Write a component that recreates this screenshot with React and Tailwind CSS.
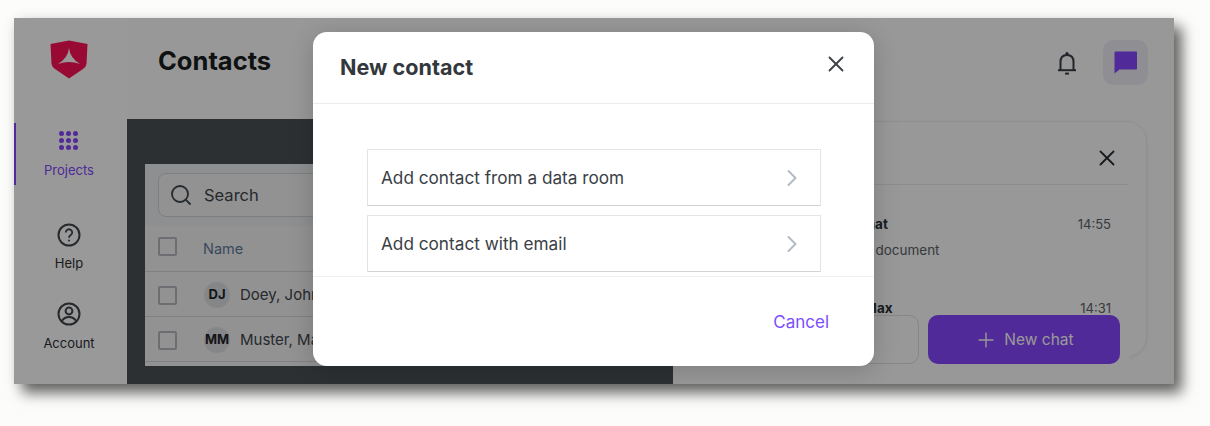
import React from 'react'
import { ChevronRight, Plus, Search, X } from 'lucide-react'

const font = 'font-["Inter","Liberation_Sans",sans-serif]'

function Logo() {
    return (
        <svg width="38" height="39" viewBox="0 0 38 39">
            <path d="M0.5 4 L19 0.500 L37.500 4 L36.500 24 Q36 27 33 29 L19 38.500 L5 29 Q2 27 1.500 24 Z" fill="#fe1255" />
            <path d="M19 8 Q20 18 30 24 Q19 20 8 24 Q18 18 19 8 Z" fill="#ffffff" />
        </svg>
    )
}

function Dots() {
    const dots = [0, 1, 2, 3, 4, 5, 6, 7, 8]
    return (
        <div className="grid grid-cols-3 gap-[2px] w-[19px]">
            {dots.map((d) => (
                <span key={d} className="w-[5px] h-[5px] rounded-full bg-[#8446fd]" />
            ))}
        </div>
    )
}

function HelpIcon() {
    return (
        <svg width="24" height="24" viewBox="0 0 24 24" fill="none" stroke="#40464c" strokeWidth="2">
            <circle cx="12" cy="12" r="10.5" />
            <path d="M8.8 9.5 a3.2 3.2 0 1 1 5 2.6 c-1.2 .8 -1.8 1.4 -1.8 2.6" strokeWidth="1.8" />
            <circle cx="12" cy="17.6" r="1" fill="#40464c" stroke="none" />
        </svg>
    )
}

function AccountIcon() {
    return (
        <svg width="24" height="24" viewBox="0 0 24 24" fill="none" stroke="#40464c" strokeWidth="2">
            <circle cx="12" cy="12" r="10.5" />
            <circle cx="12" cy="9" r="3.4" />
            <path d="M4.8 19 c2 -3 4.4 -4 7.2 -4 s5.2 1 7.2 4" />
        </svg>
    )
}

function BellIcon() {
    return (
        <svg width="20" height="24" viewBox="0 0 20 24" fill="none" stroke="#3a4046" strokeWidth="2">
            <path d="M3.5 19 V11 C3.5 6.5 6 4 10 4 C14 4 16.5 6.5 16.5 11 V19" />
            <path d="M1 19.2 H19" />
            <circle cx="10" cy="2.6" r="1.6" fill="#3a4046" stroke="none" />
            <path d="M8 22.6 H12" />
        </svg>
    )
}

function ChatIcon() {
    return (
        <svg width="23" height="23" viewBox="0 0 23 23">
            <path d="M22 0.5 H2 C1 0.5 0.5 1 0.5 2 V22.5 L5.5 18.5 H22 C22.600 18.500 23 18 23 17.500 V1.500 C23 1 22.600 .5 22 .5 Z" fill="#8446fd" />
        </svg>
    )
}

function Row({ initials, name }) {
    return (
        <div className="flex items-center h-[45px] border-b border-[#d3d6da] pl-[13px] pt-[2px]">
            <span className="w-[19px] h-[19px] border-2 border-[#b5b8bc] rounded-[2px] mr-[27px]" />
            <span className="w-[26px] h-[26px] rounded-full bg-[#dedfe3] flex items-center justify-center text-[13px] font-bold text-[#1f2429] mr-[10px]">
                {initials}
            </span>
            <span className="text-[15px] text-[#40464c]">{name}</span>
        </div>
    )
}

function ModalRow({ label }) {
    return (
        <div className="flex items-center justify-between h-[57px] border border-[#e3e4e6] border-b-[#d2d3d6] pl-[13px] pr-[14px] text-[#3a4046] text-[17.200px]">
            <span>{label}</span>
            <ChevronRight size={28} strokeWidth={1.7} className="text-[#b3bac4]" />
        </div>
    )
}

export default function App() {
    return (
        <div className={`w-[1210px] h-[426px] bg-[#fcfcfa] pt-[18px] pl-[14px] ${font}`}>
            <div className="relative flex w-[1160px] h-[366px] overflow-hidden bg-[#fdfdfd] shadow-[8px_9px_13px_rgba(0,0,0,0.6),0_0_12px_rgba(0,0,0,0.07)]">

                <div className="relative w-[113px] shrink-0 bg-white flex flex-col items-center pt-[22px] pr-[3px]">
                    <Logo />
                    <span className="absolute left-0 top-[105px] w-[2px] h-[62px] bg-[#8446fd]" />
                    <div className="mt-[52px] flex flex-col items-center">
                        <Dots />
                        <span className="mt-[11px] text-[13px] leading-[18px] text-[#8446fd]">Projects</span>
                    </div>
                    <div className="mt-[44px] flex flex-col items-center">
                        <HelpIcon />
                        <span className="mt-[7px] text-[13px] leading-[18px] text-[#2b3035]">Help</span>
                    </div>
                    <div className="mt-[30px] flex flex-col items-center">
                        <AccountIcon />
                        <span className="mt-[8px] text-[13px] leading-[18px] text-[#2b3035]">Account</span>
                    </div>
                </div>

                <div className="flex-1 flex flex-col min-w-0">
                    <div className="h-[101px] shrink-0 flex items-start justify-between pl-[31px] pr-[26px]">
                        <h1 className="mt-[25px] text-[25.500px] leading-[36px] font-bold text-[#1a1d20]">Contacts</h1>
                        <div className="flex items-center mt-[22px] gap-[26px]">
                            <BellIcon />
                            <div className="w-[45px] h-[45px] rounded-[10px] bg-[#eeedf6] flex items-center justify-center">
                                <ChatIcon />
                            </div>
                        </div>
                    </div>

                    <div className="flex-1 flex min-h-0">
                        <div className="w-[546px] shrink-0 bg-[#4a5055] pt-[45px] pl-[18px] pr-[18px] pb-[18px]">
                            <div className="bg-[#f3f4f5] h-full overflow-hidden">
                                <div className="h-[62px] bg-[#eceef0] flex items-start pl-[13px] pt-[9px]">
                                    <div className="flex items-center w-[300px] h-[44px] rounded-[8px] border border-[#d0d3d7] bg-[#f3f4f5] pl-[10px] text-[#40464c]">
                                        <Search size={24} strokeWidth={1.8} />
                                        <span className="ml-[11px] text-[16.500px]">Search</span>
                                    </div>
                                </div>
                                <div className="flex items-center h-[46px] border-b border-[#d3d6da] pl-[13px]">
                                    <span className="w-[19px] h-[19px] border-2 border-[#b5b8bc] rounded-[2px] mr-[26px] -mt-[5px]" />
                                    <span className="text-[14.500px] text-[#5f7b9c]">Name</span>
                                </div>
                                <Row initials="DJ" name="Doey, John" />
                                <Row initials="MM" name="Muster, Max" />
                            </div>
                        </div>

                        <div className="relative flex-1 min-w-0">
                            <div className="ml-[20px] mr-[27px] mt-[2px] h-[236px] rounded-[20px] border border-[#eeeeef] shadow-[0_1px_3px_rgba(0,0,0,0.06)] overflow-hidden">
                                <div className="h-[63px] mr-[18px] flex items-center justify-end border-b border-[#e9e9ea] pr-[8px] pt-[10px]">
                                    <X size={26} strokeWidth={1.7} className="text-[#2b3035]" />
                                </div>
                                <div className="pr-[35px] pl-[121px] pt-[27px]">
                                    <div className="flex justify-between text-[13.500px] leading-[24px]">
                                        <span className="font-bold text-[#2b3035]">Group chat</span>
                                        <span className="text-[13px] text-[#5c6268]">14:55</span>
                                    </div>
                                    <div className="mt-[2px] text-[13.500px] leading-[24px] text-[#5c6268]">Shared a document</div>
                                    <div className="mt-[34px] flex justify-between text-[13.500px] leading-[24px]">
                                        <span className="font-bold text-[#2b3035] -ml-[4px]">Muster, Max</span>
                                        <span className="text-[13px] text-[#5c6268]">14:31</span>
                                    </div>
                                </div>
                            </div>
                            <div className="absolute bottom-0 left-[20px] w-[436px] h-[69px] bg-[#fdfdfd] flex justify-end gap-[9px] pr-[9px]">
                                <div className="w-[200px] h-[49px] rounded-[10px] border border-[#dedfe1]" />
                                <div className="w-[192px] h-[49px] rounded-[10px] bg-[#8446fd] flex items-center justify-center gap-[6px] text-white text-[15.500px]">
                                    <Plus size={24} strokeWidth={1.4} />
                                    New chat
                                </div>
                            </div>
                        </div>
                    </div>
                </div>

                <div className="absolute inset-0 bg-[rgba(0,0,0,0.4)]" />

                <div className="absolute left-[299px] top-[14px] w-[561px] h-[334px] rounded-[14px] bg-white flex flex-col shadow-[0_4px_24px_rgba(0,0,0,0.18)]">
                    <div className="h-[72px] shrink-0 flex items-center justify-between pl-[27px] pr-[25px] border-b border-[#ececed]">
                        <h2 className="text-[21.600px] font-bold text-[#33383d]">New contact</h2>
                        <X size={26} strokeWidth={1.7} className="text-[#3a4046] -mt-[8px]" />
                    </div>
                    <div className="h-[173px] shrink-0 pt-[45px] pl-[54px] pr-[53px] flex flex-col gap-[9px] border-b border-[#f1f1f2]">
                        <ModalRow label="Add contact from a data room" />
                        <ModalRow label="Add contact with email" />
                    </div>
                    <div className="flex-1 flex items-center justify-end pr-[45px] text-[#7c4dff] text-[17px]">
                        <span className="mt-[2px]">Cancel</span>
                    </div>
                </div>
            </div>
        </div>
    )
}
